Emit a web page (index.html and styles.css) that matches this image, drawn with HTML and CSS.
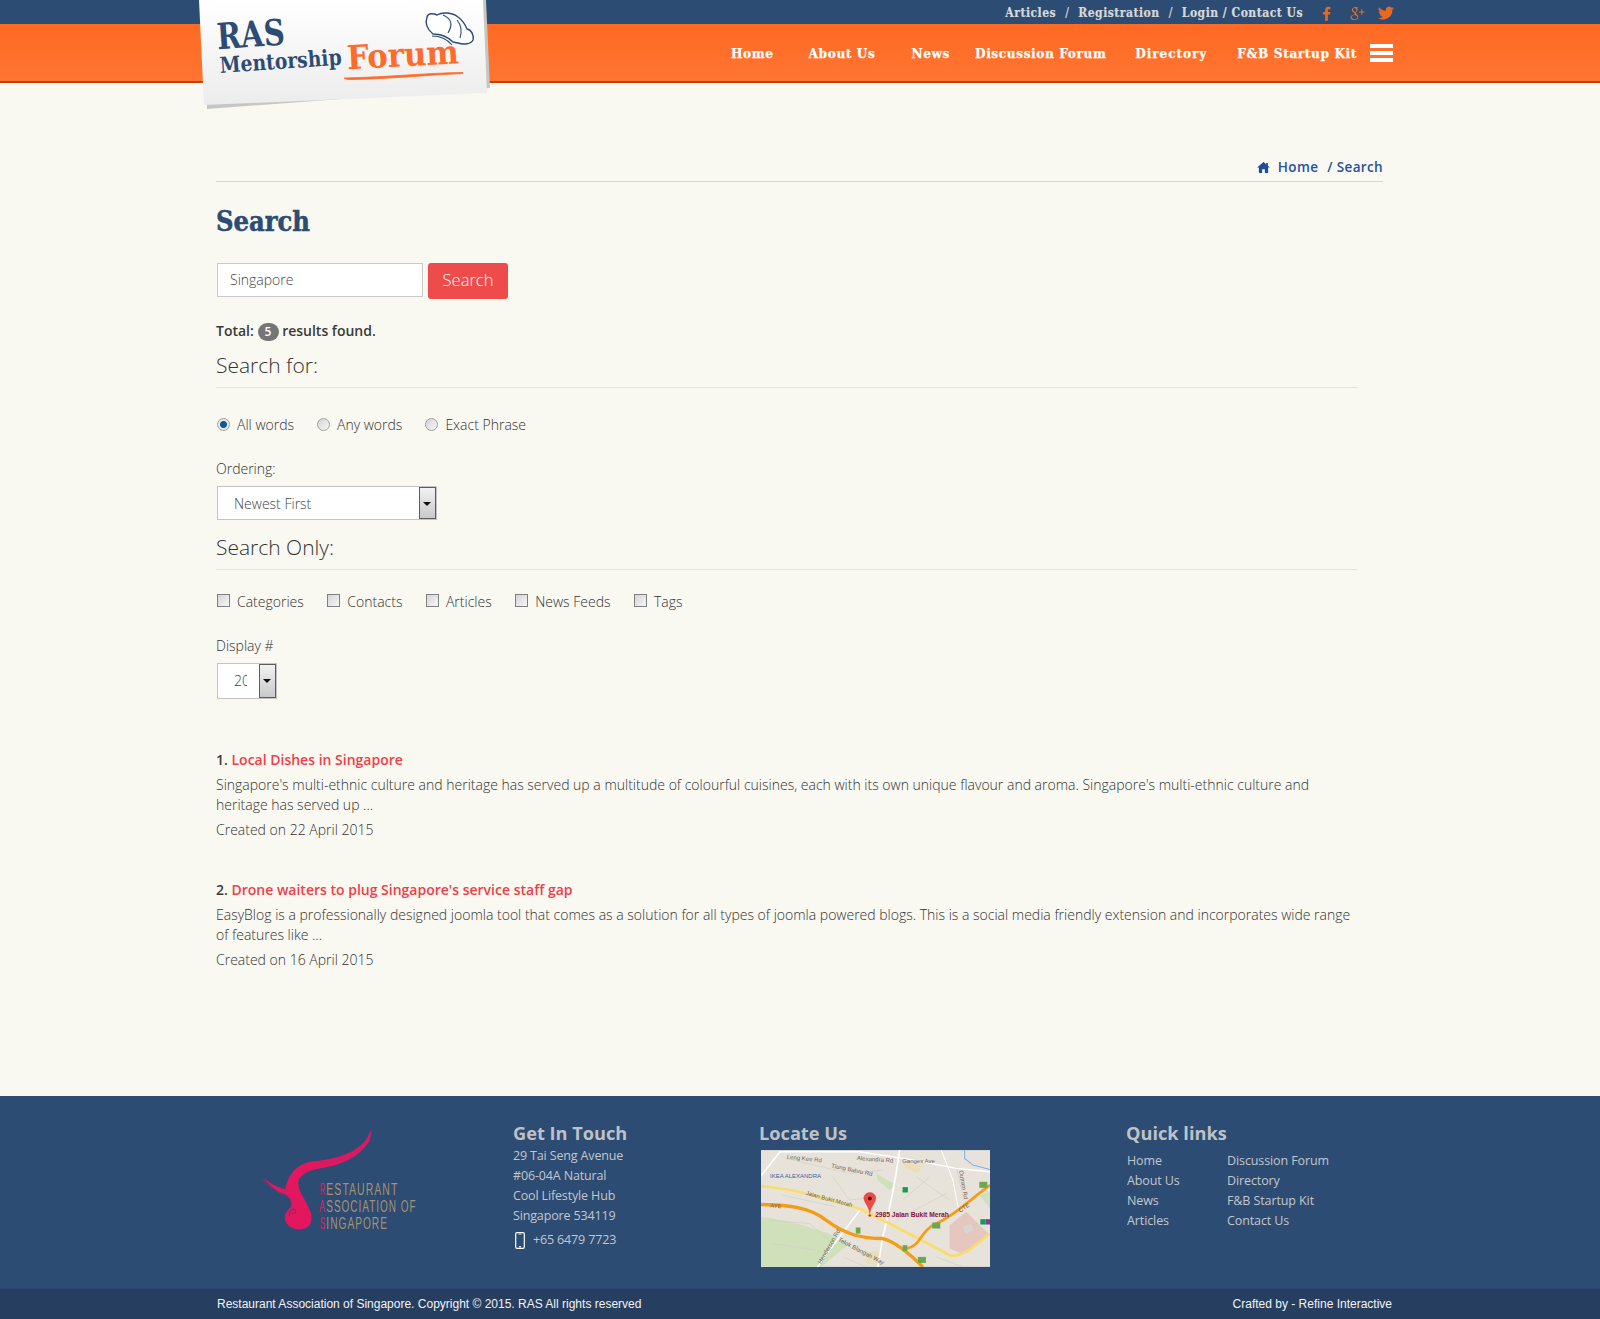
FILE: index.html
```html
<!DOCTYPE html>
<html lang="en">
<head>
<meta charset="utf-8">
<title>Search - RAS Mentorship Forum</title>
<link rel="stylesheet" href="styles.css">
</head>
<body>
<header class="header">
  <div class="top-bar">
    <nav class="top-links">
      <a>Articles</a><span class="sep">/</span><a>Registration</a><span class="sep">/</span><a>Login / Contact Us</a>
      <span class="socials">
        <svg class="soc soc-f" viewBox="0 0 10 16"><path d="M6.500 16V9h2.400l.4-2.800H6.500V4.500c0-.8.3-1.300 1.400-1.300h1.500V.7C9 .6 8.200.5 7.200.5 5 .5 3.500 1.800 3.500 4.200v2H1V9h2.500v7z"/></svg>
        <svg class="soc soc-g" viewBox="0 0 18 16"><path d="M7 1C4.500 1 3 2.500 3 4.200 3 6 4.300 7 5.800 7c-.5 1 0 1.500.3 2C4 9 1.500 10 1.500 12.200 1.500 14.300 4 15 5.700 15 8.500 15 10 13.200 10 11.700c0-2.500-2.700-2.900-2.700-4.200C7.300 6.500 9.300 6 9.300 3.800 9.300 2.700 8.700 2 8.300 1.700h1.300L10.500 1zM5.700 2c1.300 0 2.200 1.500 2.200 2.800 0 1-.5 1.500-1.400 1.500-1.400 0-2.100-1.700-2.100-2.800C4.400 2.600 5 2 5.700 2zM6 9.700c1.500.1 2.800 1 2.800 2.300S7.500 14.100 6 14.100c-1.800 0-3.200-1-3.200-2.300 0-1.300 1.500-2.200 3.200-2.100z"/><path d="M13 3.500h1.200v2.300H16.500V7H14.200v2.300H13V7H10.700V5.800H13z"/></svg>
        <svg class="soc soc-t" viewBox="0 0 20 16"><path d="M20 2c-.7.3-1.500.5-2.300.6.800-.5 1.500-1.300 1.800-2.200-.8.500-1.700.8-2.600 1A4 4 0 0 0 10 5.100 11.500 11.500 0 0 1 1.400.8a4 4 0 0 0 1.200 5.400c-.7 0-1.300-.2-1.800-.5 0 2 1.400 3.600 3.200 4-.6.200-1.200.2-1.800.1.500 1.600 2 2.700 3.800 2.800A8.100 8.100 0 0 1 0 14.200 11.500 11.500 0 0 0 17.900 4 8 8 0 0 0 20 2z"/></svg>
      </span>
    </nav>
  </div>
  <div class="main-bar">
    <nav class="main-nav">
      <a class="nav-home">Home</a><a class="nav-about">About Us</a><a class="nav-news">News</a><a class="nav-forum">Discussion Forum</a><a class="nav-dir">Directory</a><a>F&amp;B Startup Kit</a>
      <span class="burger"><i></i><i></i><i></i></span>
    </nav>
  </div>
  <svg class="logo" viewBox="0 0 320 120" aria-label="RAS Mentorship Forum">
    <defs>
      <linearGradient id="paper" x1="0" y1="0" x2="0" y2="1"><stop offset="0" stop-color="#fff"/><stop offset="1" stop-color="#ececec"/></linearGradient>
    </defs>
    <polygon points="12,0 296,0 300,88 17,109" fill="#c6c6c2"/>
    <polygon points="9,0 293,0 297,93 14,105" fill="url(#paper)"/>
    <g transform="rotate(-4 30 40)">
      <text class="logo-text" x="27" y="49" font-size="36" textLength="68" lengthAdjust="spacingAndGlyphs" fill="#2c4c74">RAS</text>
      <text class="logo-text" x="28" y="73" font-size="22" textLength="122" lengthAdjust="spacingAndGlyphs" fill="#2c4c74">Mentorship</text>
    </g>
    <g transform="rotate(-3 160 60)">
      <text class="logo-text" x="157" y="69" font-size="33" textLength="112" lengthAdjust="spacingAndGlyphs" fill="#ff6b2a">Forum</text>
    </g>
    <path d="M154 78C200 77 235 73 273 72.500L273 73.500C235 75 200 79 162 79.500 158 79.500 155 79 154 78Z" fill="#ff6b2a" stroke="#ff6b2a" stroke-width=".8"/>
    <path d="M243 34C237 29 235 23 237 17 238 13 243 13 247 15 252 12 262 12 268 17 272 20 275 24 277 29 282 30 284 36 283 40 281 44 274 45 268 43L263 42C258 37 250 34 243 34Z" fill="#fff" stroke="#2c4c74" stroke-width="1.400"/>
    <path d="M253 15C260 18 264 23 258 33M267 20C272 26 272 32 270 38M242 36C249 36 257 39 262 45" fill="none" stroke="#2c4c74" stroke-width="1.100"/>
  </svg>
</header>

<main class="content">
  <div class="breadcrumb">
    <svg class="home-ico" viewBox="0 0 14 12"><path d="M7 0 0 6h2v6h3.500V8h3v4H12V6h2l-2.200-1.900V1h-1.800v1.500z"/></svg>
    <a>Home</a><span>/ Search</span>
  </div>
  <h1 class="page-title">Search</h1>
  <form class="search-row">
    <input class="search-input" type="text" value="Singapore">
    <button class="search-btn" type="button">Search</button>
  </form>
  <p class="total">Total: <span class="badge">5</span> results found.</p>
  <div class="form-area">
    <h2 class="legend">Search for:</h2>
    <div class="options options-radio">
      <label><input type="radio" name="w" checked>All words</label>
      <label><input type="radio" name="w">Any words</label>
      <label><input type="radio" name="w">Exact Phrase</label>
    </div>
    <div class="field-label">Ordering:</div>
    <div class="select select-wide"><span class="select-value">Newest First</span><span class="select-arrow"></span></div>
    <h2 class="legend legend-only">Search Only:</h2>
    <div class="options options-check">
      <label><input type="checkbox">Categories</label>
      <label><input type="checkbox">Contacts</label>
      <label><input type="checkbox">Articles</label>
      <label><input type="checkbox">News Feeds</label>
      <label><input type="checkbox">Tags</label>
    </div>
    <div class="field-label">Display #</div>
    <div class="select select-small"><span class="select-value">20</span><span class="select-arrow"></span></div>
  </div>
  <section class="results">
    <article class="result">
      <h3>1. <a>Local Dishes in Singapore</a></h3>
      <p>Singapore's multi-ethnic culture and heritage has served up a multitude of colourful cuisines, each with its own unique flavour and aroma. Singapore's multi-ethnic culture and heritage has served up ...</p>
      <div class="created">Created on 22 April 2015</div>
    </article>
    <article class="result">
      <h3>2. <a>Drone waiters to plug Singapore's service staff gap</a></h3>
      <p>EasyBlog is a professionally designed joomla tool that comes as a solution for all types of joomla powered blogs. This is a social media friendly extension and incorporates wide range of features like ...</p>
      <div class="created">Created on 16 April 2015</div>
    </article>
  </section>
</main>

<footer class="footer">
  <div class="footer-main">
    <svg class="ras-logo" viewBox="70 60 480 315" aria-label="Restaurant Association of Singapore">
      <path d="M397 60C402 105 350 150 280 168 240 176 195 180 180 210 172 240 205 270 217 310 224 345 205 360 180 358 150 358 130 330 142 310 148 298 160 292 158 280 155 262 145 255 130 250 110 240 90 225 72 197 90 220 115 230 140 238 145 205 165 165 215 155 280 148 370 135 397 60Z" fill="#e2175f"/>
      <path d="M395 90C370 130 310 155 250 158M72 207C90 228 110 240 132 254" fill="none" stroke="#a3306f" stroke-width="2"/>
      <path d="M152 318C150 302 162 292 170 300 175 308 165 315 160 308" fill="none" stroke="#2c4c74" stroke-width="2.500"/>
      <g class="ras-text">
        <text class="ras-pink" x="243" y="254" font-size="50" textLength="16" lengthAdjust="spacingAndGlyphs">R</text>
        <text x="263" y="254" font-size="50" textLength="216" lengthAdjust="spacingAndGlyphs">ESTAURANT</text>
        <text class="ras-pink" x="241" y="305" font-size="50" textLength="18" lengthAdjust="spacingAndGlyphs">A</text>
        <text x="263" y="305" font-size="50" textLength="271" lengthAdjust="spacingAndGlyphs">SSOCIATION OF</text>
        <text class="ras-pink" x="243" y="358" font-size="50" textLength="16" lengthAdjust="spacingAndGlyphs">S</text>
        <text x="263" y="358" font-size="50" textLength="185" lengthAdjust="spacingAndGlyphs">INGAPORE</text>
      </g>
    </svg>
    <div class="f-col f-contact">
      <h4>Get In Touch</h4>
      <div class="f-line">29 Tai Seng Avenue</div>
      <div class="f-line">#06-04A Natural</div>
      <div class="f-line">Cool Lifestyle Hub</div>
      <div class="f-line">Singapore 534119</div>
      <div class="f-phone">
        <svg class="phone-ico" viewBox="0 0 10 17"><rect x=".7" y=".7" width="8.600" height="15.600" rx="1.300" fill="none" stroke="#fff" stroke-width="1.200"/><rect x="3.500" y="1.700" width="3" height=".8" fill="#fff"/><rect x="4" y="14.200" width="2" height="1.200" fill="#fff"/></svg>
        +65 6479 7723
      </div>
    </div>
    <div class="f-col f-locate">
      <h4>Locate Us</h4>
      <svg class="map" viewBox="35 120 686 350" aria-label="Map">
        <rect x="35" y="120" width="686" height="350" fill="#e7e3da"/>
        <path d="M35 320C120 330 230 360 300 400L215 470H35Z" fill="#cfe0bb"/>
        <path d="M380 190 440 225 420 240 385 210Z" fill="#cfe0bb"/>
        <path d="M690 255 721 245V295Z" fill="#cfe0bb"/>
        <path d="M460 160 520 165 505 190 470 175Z" fill="#eadfb9"/>
        <path d="M350 425 395 420 385 465 350 460Z" fill="#eadfb9"/>
        <path d="M600 345 650 305 721 375 640 432 600 415Z" fill="#e6c7c0"/>
        <path d="M640 350 665 340 672 360 648 372Z" fill="#d8d6d0"/>
        <g fill="none" stroke="#d3cec2" stroke-width="2">
          <path d="M60 330 180 340 250 400M70 400 200 420M110 145 300 190 400 180M250 200 300 270 380 260M500 200 600 270M620 170 640 260M440 330 590 250M540 200 460 270M280 440 350 470M560 440 640 470M100 255 260 290"/>
        </g>
        <g fill="none" stroke="#fff" stroke-linecap="round">
          <path d="M35 197 92 125" stroke-width="5"/>
          <path d="M90 125H330L480 148 620 175 721 185" stroke-width="4"/>
          <path d="M450 120C440 200 420 300 400 380L385 470" stroke-width="5"/>
          <path d="M335 295 240 420 205 470" stroke-width="4"/>
          <path d="M575 120 610 210 625 290" stroke-width="3"/>
        </g>
        <path d="M645 120 645 145 670 165 721 178" fill="none" stroke="#7eaff0" stroke-width="3"/>
        <path d="M35 228C120 235 200 255 330 295 420 340 520 390 600 435 640 445 680 400 721 370" fill="none" stroke="#fbdc6b" stroke-width="8"/>
        <path d="M35 283C120 285 180 290 230 330 290 375 340 385 400 385 440 395 480 430 520 470" fill="none" stroke="#f59c17" stroke-width="10"/>
        <path d="M470 415C510 410 510 370 550 345 610 320 660 270 721 225" fill="none" stroke="#f59c17" stroke-width="8"/>
        <rect x="459" y="231" width="16" height="16" fill="#0f9d58"/>
        <rect x="692" y="327" width="16" height="16" fill="#0f9d58"/>
        <rect x="708" y="327" width="13" height="16" fill="#8a3a8e"/>
        <rect x="319" y="352" width="14" height="18" fill="#6aa84f"/>
        <rect x="459" y="405" width="14" height="18" fill="#6aa84f"/>
        <rect x="548" y="337" width="24" height="18" fill="#6aa84f"/>
        <rect x="505" y="440" width="24" height="18" fill="#6aa84f"/>
        <rect x="689" y="215" width="24" height="18" fill="#6aa84f"/>
        <g class="map-labels">
          <text x="322" y="150" transform="rotate(4 322 150)">Alexandra Rd</text>
          <text x="458" y="158">Ganges Ave</text>
          <text x="112" y="146" transform="rotate(6 112 146)">Leng Kee Rd</text>
          <text x="245" y="172" transform="rotate(12 245 172)">Tiong Bahru Rd</text>
          <text x="62" y="204" class="map-poi">IKEA ALEXANDRA</text>
          <text x="168" y="254" transform="rotate(15 168 254)">Jalan Bukit Merah</text>
          <text x="62" y="292" transform="rotate(4 62 292)">AYE</text>
          <text x="632" y="308" transform="rotate(-35 632 308)">CTE</text>
          <text x="628" y="182" transform="rotate(80 628 182)">Outram Rd</text>
          <text x="265" y="392" transform="rotate(28 265 392)">Telok Blangah Way</text>
          <text x="215" y="462" transform="rotate(-60 215 462)">Henderson Rd</text>
        </g>
        <path d="M361 247C349 247 343 257 343 264 343 276 357 286 361 310 365 286 379 276 379 264 379 257 373 247 361 247Z" fill="#ee4b45" stroke="#b73a35" stroke-width="1"/>
        <circle cx="361" cy="265" r="6" fill="#611"/>
        <circle cx="361" cy="316" r="4" fill="#d32"/>
        <text class="map-addr" x="377" y="321">2985 Jalan Bukit Merah</text>
      </svg>
    </div>
    <div class="f-col f-links">
      <h4>Quick links</h4>
      <div class="link-grid">
        <a>Home</a><a>Discussion Forum</a>
        <a>About Us</a><a>Directory</a>
        <a>News</a><a>F&amp;B Startup Kit</a>
        <a>Articles</a><a>Contact Us</a>
      </div>
    </div>
  </div>
  <div class="footer-bottom">
    <span>Restaurant Association of Singapore. Copyright © 2015. RAS All rights reserved</span>
    <span>Crafted by - Refine Interactive</span>
  </div>
</footer>
</body>
</html>
```
FILE: styles.css
```css
* { box-sizing: border-box; }
html, body { margin: 0; padding: 0; }
body {
  background: #f9f8f1;
  color: #333;
  font-family: "Open Sans", "Liberation Sans", sans-serif;
  font-size: 14px;
  font-weight: 400;
}
h1, h2, h3, h4, p { margin: 0; }

/* header */
.header { position: relative; height: 83px; }
.top-bar { height: 24px; background: #2c4c74; }
.top-links {
  width: 1200px;
  margin: 0 auto;
  height: 24px;
  padding: 2px 6px 0 0;
  display: flex;
  justify-content: flex-end;
  align-items: center;
  color: #d8d8d8;
  font-family: "DejaVu Serif", serif;
  font-weight: 700;
  font-size: 12px;
  font-stretch: condensed;
  letter-spacing: .5px;
  -webkit-text-stroke: .2px #d8d8d8;
}
.sep { margin: 0 9px; font-weight: 400; }
.socials { display: flex; align-items: center; margin-left: 19px; gap: 18px; }
.soc { fill: #e8681f; display: block; }
.soc-f { width: 9px; height: 15px; }
.soc-g { width: 17px; height: 15px; }
.soc-t { width: 16px; height: 14px; margin-left: -6px; }
.main-bar {
  height: 59px;
  background: linear-gradient(#ff6a24, #ff7531);
  border-bottom: 2px solid #c04208;
}
.main-nav {
  width: 1200px;
  margin: 0 auto;
  height: 57px;
  padding-right: 7px;
  display: flex;
  justify-content: flex-end;
  align-items: center;
  gap: 35px;
  color: #fff;
  font-family: "DejaVu Serif", serif;
  font-weight: 700;
  font-size: 13.500px;
  font-stretch: condensed;
  letter-spacing: .6px;
  -webkit-text-stroke: .25px #fff;
}
.nav-about { margin-right: 1px; }
.nav-news { margin-right: -10px; }
.nav-forum { margin-right: -6px; }
.nav-dir { margin-right: -5px; letter-spacing: .9px; }
.burger { display: flex; flex-direction: column; gap: 3px; margin-left: -22px; }
.burger i { display: block; width: 23px; height: 4px; background: #fff; }
.logo { position: absolute; left: 190px; top: 0; width: 320px; height: 120px; }
.logo-text { font-family: "DejaVu Serif", serif; font-weight: 700; }

/* main */
.content { width: 1168px; margin: 0 auto; height: 1013px; padding-top: 75px; }
.breadcrumb {
  display: flex;
  justify-content: flex-end;
  align-items: center;
  height: 24px;
  width: 1167px;
  border-bottom: 1px solid #d4d3cd;
  padding-bottom: 5px;
  color: #2a4fa0;
  font-weight: 600;
  font-size: 13.500px;
  letter-spacing: .35px;
}
.home-ico { width: 13px; height: 11px; fill: #1f4aa0; margin-right: 8px; }
.breadcrumb a { margin-right: 9px; }
.page-title {
  margin-top: 23px;
  font-family: "DejaVu Serif", serif;
  font-weight: 700;
  font-size: 27px;
  font-stretch: condensed;
  line-height: 34px;
  color: #2c4c74;
  -webkit-text-stroke: .5px #2c4c74;
}
.search-row { display: flex; gap: 5px; margin-top: 24px; align-items: flex-start; }
.search-input {
  width: 206px;
  height: 34px;
  border: 1px solid #c9c9c9;
  background: #fff;
  padding: 0 12px 2px;
  font: 300 14px "Open Sans", sans-serif;
  color: #444;
  margin-left: 1px;
}
.search-btn {
  width: 80px;
  height: 36px;
  border: 0;
  border-radius: 3px;
  background: #ee4b4b;
  color: #fff;
  font: 300 16.500px "Open Sans", sans-serif;
  padding: 0 0 4px;
}
.total { margin-top: 21px; line-height: 22px; font-weight: 600; color: #3a3a3a; }
.badge {
  display: inline-block;
  width: 21px;
  height: 18px;
  line-height: 18px;
  text-align: center;
  border-radius: 9px;
  background: #757575;
  color: #fff;
  font-size: 12px;
  vertical-align: 0;
}
.form-area { width: 1141px; }
.legend {
  font-weight: 300;
  font-size: 21px;
  line-height: 30px;
  color: #333;
  padding-bottom: 7px;
  border-bottom: 1px solid #e3e2dc;
  margin-top: 8px;
}
.legend-only { margin-top: 12px; }
.options { display: flex; font-weight: 300; line-height: 20px; }
.options label { display: flex; align-items: center; }
.options input {
  appearance: none;
  margin: 0 7px 0 0;
  width: 13px;
  height: 13px;
  background: linear-gradient(135deg, #d4d4d4, #f7f7f7);
}
.options-radio { margin-top: 27px; gap: 22px; }
.options-radio input { border: 1px solid #a0a0a0; border-radius: 50%; margin-left: 1px; position: relative; top: -1px; }
.options-radio input:checked { background: radial-gradient(circle, #0b5a92 0 3px, #e8e8e8 4px); }
.options-check { margin-top: 22px; gap: 22.500px; }
.options-check input { border: 1px solid #808080; margin-left: 1px; position: relative; top: -2px; }
.field-label { font-weight: 300; line-height: 20px; margin-top: 24px; }
.select {
  display: flex;
  align-items: stretch;
  margin: 7px 0 0 1px;
  background: #fff;
  border: 1px solid #c4c4c4;
  font-weight: 300;
  color: #444;
}
.select-wide { width: 220px; height: 34px; }
.select-small { width: 60px; height: 36px; margin-top: 7px; }
.select-value { flex: 1; padding-left: 16px; line-height: 33px; overflow: hidden; white-space: nowrap; min-width: 0; }
.select-small .select-value { margin-right: 12px; }
.select-arrow {
  width: 17px;
  flex: none;
  position: relative;
  border: 1px solid #5c5c5c;
  background: linear-gradient(#f2f2f2, #c9c9c9);
}
.select-arrow::after {
  content: "";
  position: absolute;
  left: 3px;
  top: 14px;
  border: 4px solid transparent;
  border-top: 4px solid #111;
  border-bottom: 0;
}
.results { width: 1141px; margin-top: 50px; }
.result { margin-bottom: 39px; }
.result h3 { font-size: 14px; font-weight: 600; line-height: 22px; color: #3a3a3a; }
.result h3 a { color: #ee4048; }
.result p { font-weight: 300; line-height: 19.500px; margin-top: 4px; }
.created { font-weight: 300; line-height: 20px; margin-top: 6px; }

/* footer */
.footer { background: #2c4c74; height: 223px; color: #c4c6ca; }
.footer-main { width: 1200px; height: 193px; margin: 0 auto; display: grid; grid-template-columns: 62px 251px 246px 367px 1fr; }
.ras-logo { grid-column: 2; width: 160px; height: 105px; margin-top: 34px; }
.ras-text text { font-family: "Liberation Sans", sans-serif; fill: #a8906e; letter-spacing: 5px; }
.ras-text .ras-pink { fill: #d9215f; letter-spacing: 0; }
.f-col h4 { font-size: 18.200px; font-weight: 700; line-height: 25px; margin-top: 25px; color: #bfc1c5; }
.f-contact { grid-column: 3; }
.f-locate { grid-column: 4; }
.f-links { grid-column: 5; }
.f-line { font-size: 12.500px; letter-spacing: -.15px; line-height: 20px; }
.f-phone { display: flex; align-items: center; gap: 8px; font-size: 12.500px; letter-spacing: -.15px; line-height: 24px; margin-top: 2px; margin-left: 2px; }
.phone-ico { width: 10px; height: 17px; }
.map { display: block; width: 229px; height: 117px; margin: 4px 0 0 2px; }
.map-labels text { font: 400 18px "Liberation Sans", sans-serif; fill: #6d665c; }
.map-labels .map-poi { fill: #3a5fa8; }
.map-addr { font: 700 20px "Liberation Sans", sans-serif; fill: #8a1030; }
.link-grid { display: grid; grid-template-columns: 100px 1fr; font-size: 12.500px; letter-spacing: -.1px; line-height: 20px; margin: 5px 0 0 1px; }
.footer-bottom {
  height: 30px;
  background: #263f61;
  padding: 0 208px 0 217px;
  display: flex;
  justify-content: space-between;
  align-items: center;
  color: #f2f2f2;
  font: 400 12px "Liberation Sans", sans-serif;
}
```
